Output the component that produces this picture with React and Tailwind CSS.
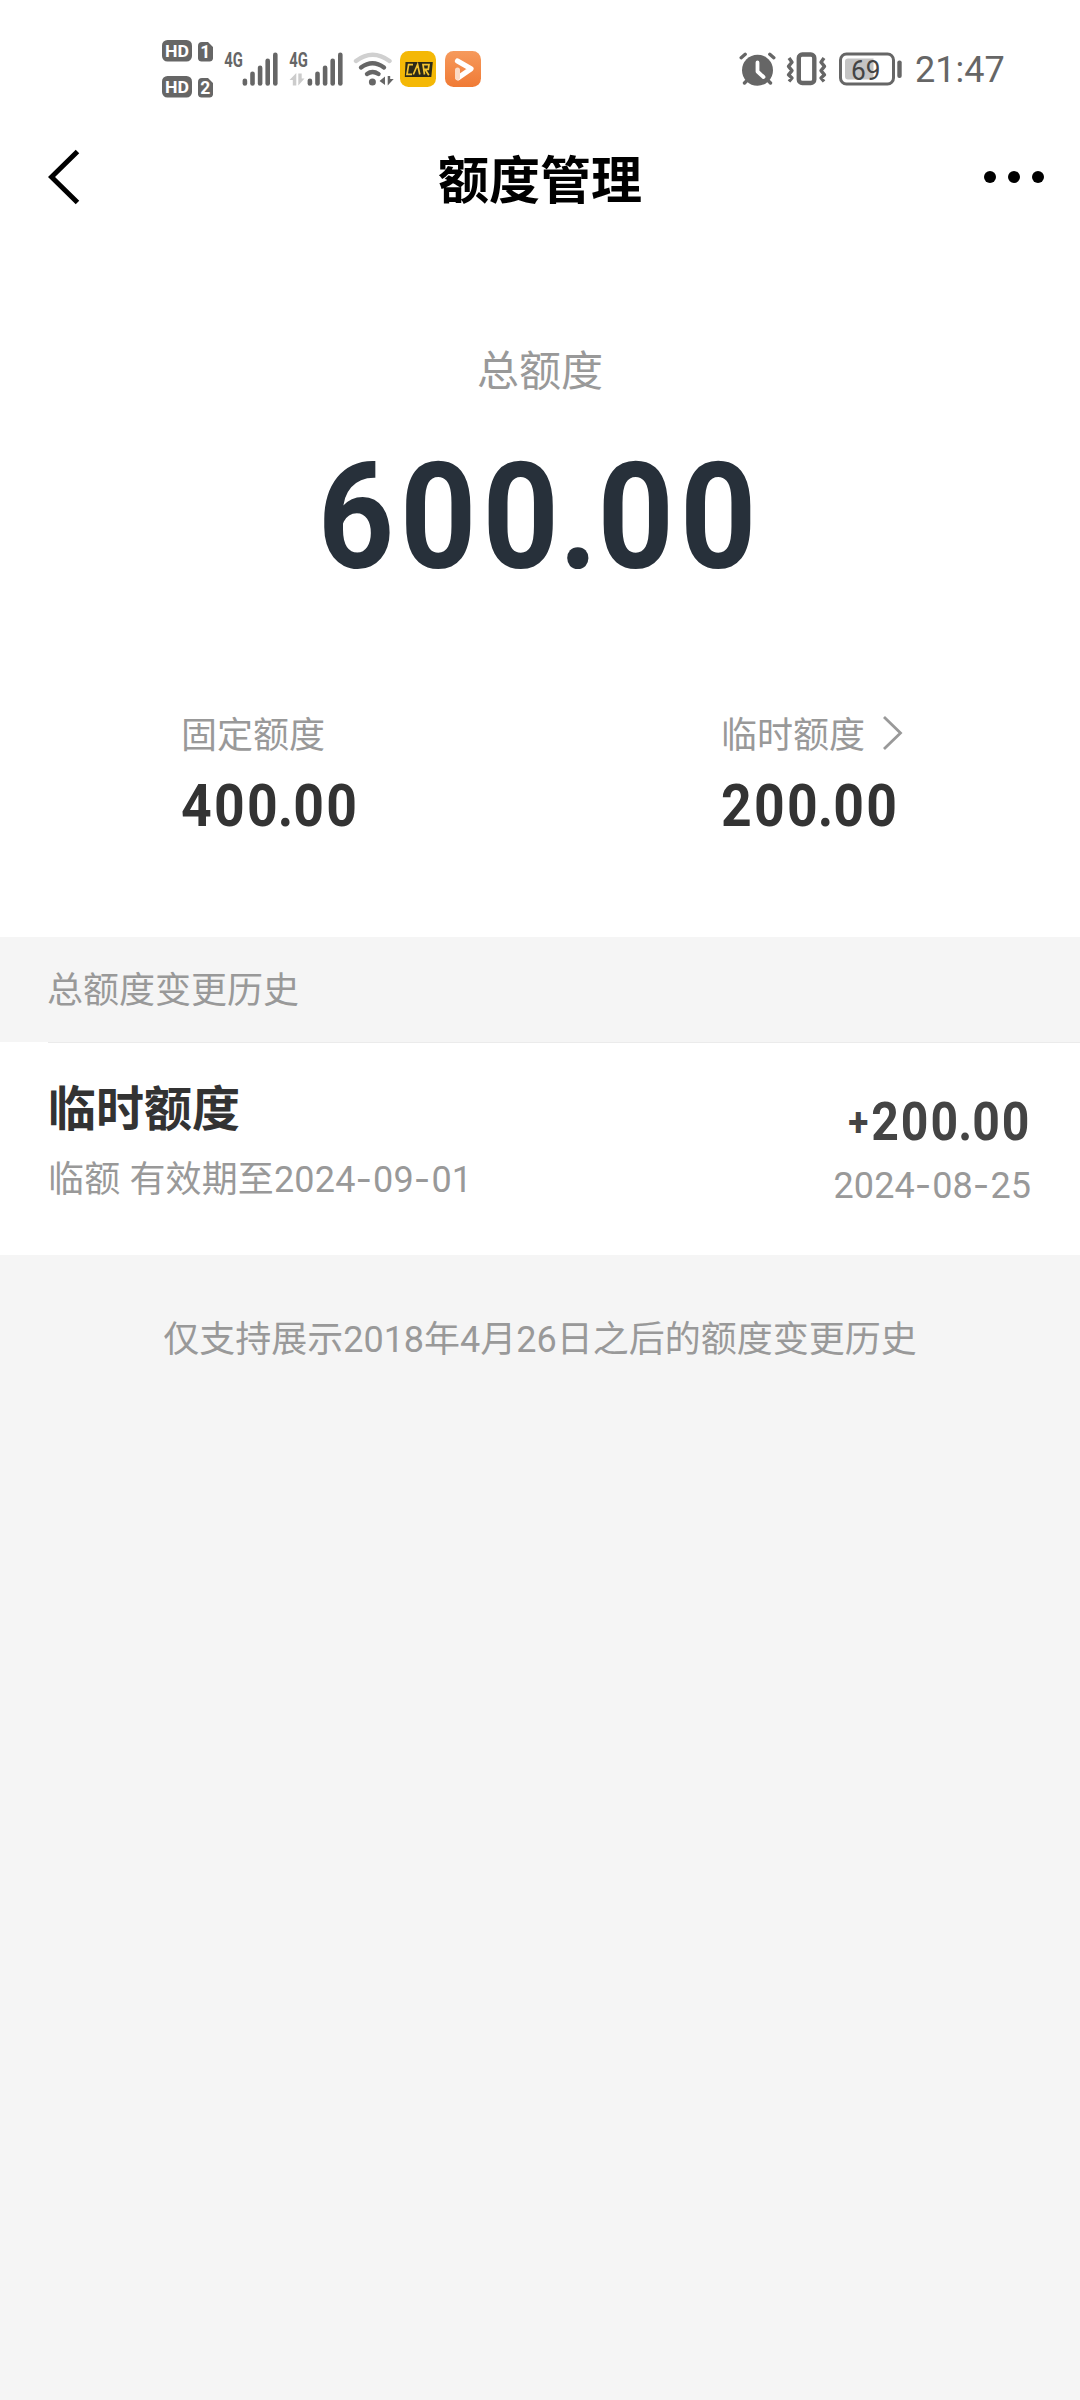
const CJK = "font-['Noto_Sans_CJK_SC',sans-serif]";
const MIX = "font-['Roboto','Noto_Sans_CJK_SC',sans-serif]";

function Amount({ whole, cents, className, dotClass }) {
  return (
    <span className={`inline-block scale-x-90 whitespace-nowrap font-['Roboto'] font-bold ${className}`}>
      {whole}
      <span className={dotClass}>.</span>
      {cents}
    </span>
  );
}

function DateText({ value }) {
  return value.split("-").map((part, i) => (
    <span key={i}>
      {i > 0 && <span className="font-['Inter'] tracking-[1px]">-</span>}
      {part}
    </span>
  ));
}

function SimBadges() {
  const tag = { fontFamily: "Roboto", fontWeight: 700, fill: "#fff", textAnchor: "middle" };
  return (
    <svg className="ml-[162px] h-[58px] w-[51px] shrink-0 overflow-visible" viewBox="162 40 51 58">
      {[40, 76].map((y, i) => (
        <g key={y}>
          <rect x="162" y={y} width="30" height="21.500" rx="5.500" fill="#666" />
          <text x="177" y={y + 16.6} fontSize="16.500" textLength="24" lengthAdjust="spacingAndGlyphs" style={tag}>HD</text>
          <path d={`M202 ${y + 2}h6l5 5v11.500a3.500 3.500 0 0 1-3.500 3h-8a3.500 3.500 0 0 1-3.500-3v-12.500a4 4 0 0 1 4-4z`} fill="#666" />
          <text x="205.300" y={y + 18.4} fontSize="17.500" style={tag}>{i + 1}</text>
        </g>
      ))}
    </svg>
  );
}

function Signal({ className, arrows }) {
  const tops = [79.3, 72.3, 66.3, 59.3, 53.3];
  return (
    <svg className={`h-[36px] w-[54px] shrink-0 overflow-visible ${className}`} viewBox="224.500 49.500 54 36">
      <text x="224.700" y="65.700" fontSize="20.500" textLength="18.600" lengthAdjust="spacingAndGlyphs" fill="#666" style={{ fontFamily: "Roboto", fontWeight: 700 }}>4G</text>
      {tops.map((t, i) => (
        <path key={t} d={`M${245.4 + i * 7.6} ${t}V82`} stroke="#666" strokeWidth="4.600" strokeLinecap="round" />
      ))}
      {arrows && (
        <path d="M231.800 84v-12.500l-6.800 7h3.300v5.500zM233.800 72v12l6.200-7h-2.800v-5z" fill="#ccc" />
      )}
    </svg>
  );
}

function Wifi() {
  return (
    <svg className="ml-[10px] h-[36px] w-[41px] shrink-0" viewBox="353 49.500 41 36" fill="none" strokeLinecap="round" strokeWidth="4.400">
      <path d="M356 59.500Q372.500 47 389.500 59.500" stroke="#d0d0d0" />
      <path d="M361 66Q372.500 57.500 384 66" stroke="#666" />
      <path d="M367 72.500Q372.500 68.500 378.500 72.500" stroke="#666" />
      <circle cx="372.400" cy="80.500" r="3.500" fill="#666" />
      <path d="M385 75v8.500l-5.500-4zM387.700 74.500v9.500l6-6.500h-3.500v-3z" fill="#666" />
    </svg>
  );
}

function CarApp() {
  return (
    <svg className="ml-[6px] h-[36px] w-[36px] shrink-0" viewBox="0 0 36 36">
      <rect width="36" height="36" rx="8.500" fill="#f4b806" />
      <path d="M5.500 11h27.300l-1.500 15H4.800z" fill="#2c2a18" />
      <path d="M13 13.700H8.600L7 23.300h5M13.300 23.500L17.600 13.500l2.200 10M24.500 23.500L23 13.700h6l-.7 4.600h-3.200l3.700 6" fill="none" stroke="#f4c430" strokeWidth="1.700" />
    </svg>
  );
}

function VideoApp() {
  return (
    <svg className="ml-[9px] h-[36px] w-[36px] shrink-0" viewBox="0 0 36 36">
      <defs>
        <linearGradient id="warm" x1="0" y1="0" x2="0" y2="1">
          <stop stopColor="#f69a5c" />
          <stop offset="1" stopColor="#f07a35" />
        </linearGradient>
      </defs>
      <rect width="36" height="36" rx="8.500" fill="url(#warm)" />
      <path d="M12.500 10L26 17.800L13 26.800" fill="none" stroke="#fff" strokeWidth="5.200" strokeLinecap="round" strokeLinejoin="round" />
      <path d="M12.500 19v7.500" stroke="#fbd9c3" strokeWidth="5" strokeLinecap="round" />
    </svg>
  );
}

function Alarm() {
  return (
    <svg className="ml-auto h-[34px] w-[37px] shrink-0" viewBox="739 51.500 37 34" fill="none" strokeLinecap="round">
      <circle cx="757.500" cy="69.700" r="15.500" fill="#666" />
      <path d="M741.200 57.200l4-3.400M773.800 57.200l-4-3.400M744.500 82.500l3-3M770.500 82.500l-3-3" stroke="#666" strokeWidth="3.400" />
      <path d="M757.500 62v9l6 5.500" stroke="#fff" strokeWidth="3.800" strokeLinejoin="round" />
    </svg>
  );
}

function Vibrate() {
  return (
    <svg className="ml-[10px] h-[34px] w-[42px] shrink-0" viewBox="786 51.500 42 34" fill="none" stroke="#666">
      <rect x="798.800" y="54" width="15.500" height="28.500" rx="3.500" strokeWidth="4.400" />
      <path d="M789 57.500l3 4.200-3.500 4.200 3.500 4.200-3.500 4.200 3.500 3.200-3 3.500M824 57.500l-3 4.200 3.500 4.200-3.500 4.200 3.500 4.200-3.500 3.200 3 3.500" strokeWidth="3.400" strokeLinejoin="round" />
    </svg>
  );
}

function Battery() {
  return (
    <svg className="ml-[11px] h-[34px] w-[63px] shrink-0" viewBox="839 51.500 63 34">
      <rect x="840.500" y="53.500" width="53" height="30" rx="6" fill="none" stroke="#666" strokeWidth="3" />
      <path d="M848 58h25.500v21H848a3 3 0 0 1-3-3v-15a3 3 0 0 1 3-3z" fill="#c4c4c4" />
      <text x="865.800" y="79" fontSize="28.500" textAnchor="middle" textLength="29.500" lengthAdjust="spacingAndGlyphs" fill="#444" style={{ fontFamily: "Roboto" }}>69</text>
      <rect x="897.300" y="60" width="4.400" height="17.500" rx="2" fill="#666" />
    </svg>
  );
}

function StatusBar() {
  return (
    <div className="flex h-[137px] items-center">
      <SimBadges />
      <Signal className="ml-[11px]" />
      <Signal className="ml-[11px]" arrows />
      <Wifi />
      <CarApp />
      <VideoApp />
      <Alarm />
      <Vibrate />
      <Battery />
      <span className="ml-[13px] mr-[76px] mt-[3px] w-[89px] whitespace-nowrap font-['Roboto'] text-[36px] leading-[40px] text-[#666]">21:47</span>
    </div>
  );
}

export default function App() {
  return (
    <div className={`flex h-[2400px] w-[1080px] flex-col overflow-hidden bg-[#f5f5f5] ${CJK}`}>
      <section className="h-[937px] shrink-0 bg-white">
        <StatusBar />
        <header className="flex h-[80px] items-center justify-between pl-[48px] pr-[36px]">
          <svg className="h-[56px] w-[48px]" viewBox="48 149 48 56" fill="none" stroke="#000" strokeWidth="5">
            <path d="M77.500 151.500L51.500 177L77.500 202.500" />
          </svg>
          <h1 className="text-[51px] font-bold leading-[80px] text-black">额度管理</h1>
          <div className="flex gap-3">
            <i className="size-3 rounded-full bg-black" />
            <i className="size-3 rounded-full bg-black" />
            <i className="size-3 rounded-full bg-black" />
          </div>
        </header>

        <div className="flex flex-col items-center pt-[121px]">
          <p className="text-[42px] leading-[60px] text-[#999]">总额度</p>
          <Amount whole="600" cents="00" className="mt-[44px] text-[148px] leading-[152px] tracking-[6.6px] text-[#27303a]" dotClass="-ml-[6.500px] tracking-[0px]" />
        </div>

        <div className="mt-[113px] flex">
          <div className="w-[540px] pl-[181px]">
            <p className="text-[36px] leading-[50px] text-[#999]">固定额度</p>
            <Amount whole="400" cents="00" className="mt-[19px] origin-left text-[59.5px] leading-[60px] tracking-[2.5px] text-[#333]" dotClass="-ml-[2.500px] tracking-[0px]" />
          </div>
          <div className="pl-[181px]">
            <div className="flex items-center">
              <p className="text-[36px] leading-[50px] text-[#999]">临时额度</p>
              <svg className="ml-[17px] mt-[2px] h-[36px] w-[22px]" viewBox="882 716 22 36" fill="none" stroke="#999" strokeWidth="2.800">
                <path d="M884 718L900.500 734L884 750" />
              </svg>
            </div>
            <Amount whole="200" cents="00" className="mt-[19px] origin-left text-[59.5px] leading-[60px] tracking-[2.5px] text-[#333]" dotClass="-ml-[2.500px] tracking-[0px]" />
          </div>
        </div>
      </section>

      <h2 className="h-[105px] shrink-0 pl-[47px] text-[36px] leading-[101px] text-[#999]">总额度变更历史</h2>

      <section className="h-[213px] shrink-0 bg-white">
        <div className="ml-12 h-px bg-[#ebebeb]" />
        <div className="flex justify-between pl-12 pr-[49px]">
          <div className="pt-[30px]">
            <h3 className="text-[48px] font-bold leading-[64px] text-[#333]">临时额度</h3>
            <p className={`mt-[17px] whitespace-nowrap text-[36px] leading-[50px] tracking-[0.15px] text-[#999] ${MIX}`}>
              临额 有效期至<DateText value="2024-09-01" />
            </p>
          </div>
          <div className="flex flex-col items-end pt-[49px]">
            <div className="-mr-[1px] flex origin-right scale-x-90 items-center font-['Roboto'] font-bold leading-[60px] text-[#444]">
              <span className="mr-[3px] text-[41px]">+</span>
              <span className="whitespace-nowrap text-[53.5px] tracking-[2.300px]">
                200<span className="-ml-[2.300px] tracking-[0px]">.</span>00
              </span>
            </div>
            <p className={`mt-[8px] whitespace-nowrap text-[36px] leading-[50px] tracking-[0.05px] text-[#999] ${MIX}`}>
              <DateText value="2024-08-25" />
            </p>
          </div>
        </div>
      </section>

      <p className={`mt-[60px] whitespace-nowrap text-center text-[36px] leading-[50px] text-[#999] ${MIX}`}>
        仅支持展示2018年4月26日之后的额度变更历史
      </p>
    </div>
  );
}
